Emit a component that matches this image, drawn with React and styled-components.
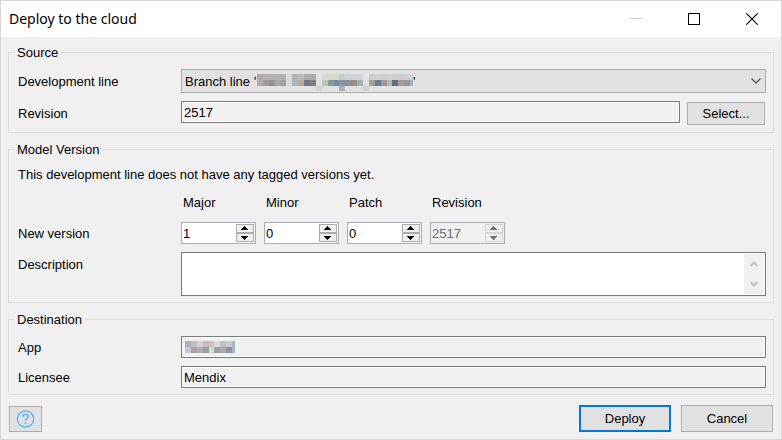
import React, { useState } from 'react';
import styled, { createGlobalStyle, css } from 'styled-components';

const GlobalStyle = createGlobalStyle`
  *, *::before, *::after { box-sizing: border-box; }
  body {
    margin: 0;
    background: #f0f0f0;
    color: #000;
    font: 13px/15px "Liberation Sans", Arial, sans-serif;
  }
  button, input, select, textarea { font: inherit; color: inherit; margin: 0; }
`;

const Window = styled.form`
  border: 1px solid #d6d6d6;
  background: #f0f0f0;
`;

const TitleBar = styled.header`
  display: flex;
  align-items: center;
  height: 36px;
  padding-left: 8px;
  background: #fff;
`;

const Title = styled.h1`
  flex: 1;
  margin: 0;
  font: 400 14px/20px "Noto Sans", "Segoe UI", sans-serif;
`;

const CaptionButton = styled.button`
  display: grid;
  place-items: center;
  width: 58px;
  height: 34px;
  padding: 0;
  border: 0;
  background: transparent;
  color: ${(p) => (p.disabled ? '#ccc' : '#000')};
`;

const Content = styled.main`
  display: flex;
  flex-direction: column;
  gap: 9px;
  padding: 8px 7px 7px;
`;

const Group = styled.fieldset`
  min-width: 0;
  margin: 0;
  padding: 9px 7px ${(p) => (p.$roomy ? '7px' : '6px')} 9px;
  border: 1px solid #dcdcdc;
`;

const Legend = styled.legend`
  margin-left: -3px;
  padding: 0 2px;
`;

const Rows = styled.div`
  display: flex;
  flex-direction: column;
  gap: 8px;
`;

const Row = styled.div`
  display: grid;
  grid-template-columns: 163px minmax(0, 1fr);
  align-items: ${(p) => (p.$top ? 'start' : 'center')};
`;

const Label = styled.label`
  padding-top: ${(p) => (p.$top ? '5px' : 0)};
`;

const Inline = styled.div`
  display: flex;
  align-items: flex-start;
  gap: 7px;
  padding-right: 1px;
`;

const Note = styled.p`
  margin: 1px 0 5px;
`;

const FieldWrap = styled.div`
  position: relative;
  display: flex;
`;

const TextBox = styled.input`
  flex: 1;
  min-width: 0;
  width: 100%;
  height: 22px;
  padding: 0 2px;
  border: 1px solid #7a7a7a;
  border-radius: 0;
  background: #f0f0f0;
  box-shadow: inset 0 0 0 1px #fff;
  outline: 0;
`;

const Combo = styled.select`
  appearance: none;
  width: 100%;
  height: 24px;
  padding: 0 24px 0 3px;
  border: 1px solid #adadad;
  border-radius: 0;
  background: #e1e1e1;
`;

const ComboArrow = styled.svg`
  position: absolute;
  right: 5px;
  top: 9px;
  pointer-events: none;
`;

const Redaction = styled.span`
  position: absolute;
  left: ${(p) => p.$left};
  top: 5px;
  display: flex;
  align-items: flex-start;
  pointer-events: none;
`;

const buttonFace = css`
  padding: 0;
  border: 1px solid #adadad;
  border-radius: 0;
  background: #e1e1e1;
`;

const Button = styled.button`
  ${buttonFace}
  width: 92px;
  height: 27px;
  ${(p) => p.$primary && 'border: 2px solid #0078d7;'}
`;

const SelectButton = styled.button`
  ${buttonFace}
  width: 78px;
  height: 23px;
  margin-top: 1px;
`;

const HelpButton = styled.button`
  ${buttonFace}
  display: grid;
  place-items: center;
  width: 33px;
  height: 26px;
  margin-right: auto;
`;

const Versions = styled.div`
  display: flex;
  gap: 8px;
`;

const VersionHead = styled.label`
  width: 75px;
  padding: 0 0 4px 2px;
`;

const SpinBox = styled.div`
  display: flex;
  width: 75px;
  height: 22px;
  padding: 1px;
  border: 1px solid #abadb3;
  background: ${(p) => (p.$disabled ? '#f0f0f0' : '#fff')};
  color: ${(p) => (p.$disabled ? '#6d6d6d' : '#000')};
`;

const SpinInput = styled.input`
  flex: 1;
  min-width: 0;
  padding: 0;
  border: 0;
  background: transparent;
  outline: 0;
`;

const SpinButtons = styled.div`
  display: grid;
  grid-template-rows: 1fr 1fr;
  width: 18px;
`;

const SpinButton = styled.button`
  display: grid;
  place-items: center;
  padding: 0;
  border: 1px solid ${(p) => (p.disabled ? '#d4d4d4' : '#acacac')};
  background: #f0f0f0;
  color: ${(p) => (p.disabled ? '#6d6d6d' : '#000')};
`;

const MemoBox = styled.div`
  display: flex;
  height: 44px;
  padding: 1px;
  border: 1px solid #7a7a7a;
  background: #fff;
`;

const Memo = styled.textarea`
  flex: 1;
  min-width: 0;
  padding: 1px 2px;
  border: 0;
  resize: none;
  outline: 0;
  overflow: hidden;
  background: transparent;
`;

const ScrollStrip = styled.div`
  display: flex;
  flex-direction: column;
  width: 20px;
  background: #f0f0f0;
`;

const ScrollButton = styled.button`
  flex: 1;
  display: grid;
  place-items: center;
  padding: 0;
  border: 0;
  background: transparent;
`;

const Footer = styled.footer`
  display: flex;
  align-items: center;
  gap: 10px;
  padding: 1px 1px 0;
`;

const BRANCH_CELLS = [
  ['#aeabab', '#adabac'], ['#b5aeaa', '#a39994'], ['#aab3b8', '#8d9696'],
  ['#b9adad', '#aaa6a4'], ['#abb5b5', '#999fac'], ['#d9d9d7', '#d9d9d7'],
  ['#a9b5bd', '#a5b8c5'], ['#b9bbae', '#b8ab92'], ['#aaabb4', '#727885'],
  ['#b0a9ae', '#857a7d'], [null, null, '#d0d0d0'], ['#d5d9d5', '#b3c7c1'],
  ['#d6d8ce', '#8b9c9a'], ['#d5d8cd', '#7090a4'], ['#c9c9cb', '#8d93a0', '#adb0b8'],
  ['#d0d3d6', '#928c99'], ['#d3cfd2', '#9c8f86'], ['#d2d5d7', '#a1b0b8'],
  [null, null, '#d0d0d0'], ['#cccec5', '#a0a597'], ['#cfcfcf', '#6c7b95'],
  ['#cdcdcd', '#a59694'], ['#d0d0d0', '#b3b8ba'], ['#cecece', '#626e7f'],
  ['#cdcacd', '#a39d99'], ['#cfcccf', '#9896a3'], ['#cfd2d2', '#a3b3b8'],
];

const APP_CELLS = [
  ['#b3b0bb', '#c8c5d6'], ['#c0c0c0', '#a9a0a3'], ['#d2d2d6', '#a8b0ae'],
  ['#c4bcc0', '#a29aa5'], ['#c6c3b8', '#cde2c4'], ['#d9dbd8', '#9c9eb0'],
  ['#bdc2bd', '#a9aaa5'], ['#c6c9cf', '#8f929b'], ['#9db9cd', '#9db3c4'],
];

function Mosaic({ cells, width, height, columns }) {
  return (
    <svg
      width={width}
      height={height}
      viewBox={`0 0 ${columns * 6} ${height}`}
      preserveAspectRatio="none"
      shapeRendering="crispEdges"
      aria-hidden="true"
    >
      {cells.map((column, x) =>
        column.map((fill, y) =>
          fill ? <rect key={`${x}-${y}`} x={x * 6} y={y * 6} width="6" height="6" fill={fill} /> : null
        )
      )}
    </svg>
  );
}

function Triangle({ down }) {
  return (
    <svg width="8" height="5" shapeRendering="crispEdges" aria-hidden="true">
      <path
        fill="currentColor"
        d={down ? 'M0 1h7v1H0zM1 2h5v1H1zM2 3h3v1H2zM3 4h1v1H3z' : 'M3 0h1v1H3zM2 1h3v1H2zM1 2h5v1H1zM0 3h7v1H0z'}
      />
    </svg>
  );
}

function Spinner({ id, initial, disabled }) {
  const [value, setValue] = useState(initial);
  const step = (n) => setValue((v) => Math.max(0, Number(v) + n));
  return (
    <SpinBox $disabled={disabled}>
      <SpinInput id={id} inputMode="numeric" value={value} disabled={disabled} onChange={(e) => setValue(e.target.value)} />
      <SpinButtons>
        <SpinButton type="button" aria-label="Increase" disabled={disabled} onClick={() => step(1)}>
          <Triangle />
        </SpinButton>
        <SpinButton type="button" aria-label="Decrease" disabled={disabled} onClick={() => step(-1)}>
          <Triangle down />
        </SpinButton>
      </SpinButtons>
    </SpinBox>
  );
}

const VERSION_PARTS = [
  { id: 'major', label: 'Major', value: 1 },
  { id: 'minor', label: 'Minor', value: 0 },
  { id: 'patch', label: 'Patch', value: 0 },
  { id: 'rev', label: 'Revision', value: 2517, disabled: true },
];

export default function App() {
  return (
    <>
      <GlobalStyle />
      <Window onSubmit={(e) => e.preventDefault()}>
        <TitleBar>
          <Title>Deploy to the cloud</Title>
          <CaptionButton type="button" aria-label="Minimize" disabled>
            <svg width="12" height="12" shapeRendering="crispEdges"><path d="M0 5h12v1H0z" fill="currentColor" /></svg>
          </CaptionButton>
          <CaptionButton type="button" aria-label="Maximize">
            <svg width="12" height="12" shapeRendering="crispEdges"><path d="M.5.5h11v11H.5z" fill="none" stroke="currentColor" /></svg>
          </CaptionButton>
          <CaptionButton type="button" aria-label="Close">
            <svg width="12" height="12"><path d="M.3.3l11.4 11.4M11.7.3L.3 11.7" fill="none" stroke="currentColor" strokeWidth="1.1" /></svg>
          </CaptionButton>
        </TitleBar>
        <Content>
          <Group $roomy>
            <Legend>Source</Legend>
            <Rows>
              <Row>
                <Label htmlFor="line">Development line</Label>
                <FieldWrap>
                  <Combo id="line">
                    <option>Branch line '</option>
                  </Combo>
                  <Redaction $left="76px">
                    <Mosaic cells={BRANCH_CELLS} columns={26.5} width={156} height={17} />'
                  </Redaction>
                  <ComboArrow width="10" height="6" aria-hidden="true">
                    <path d="M.5 .5L5 5L9.5 .5" fill="none" stroke="#444" strokeWidth="1.1" />
                  </ComboArrow>
                </FieldWrap>
              </Row>
              <Row>
                <Label htmlFor="revision">Revision</Label>
                <Inline>
                  <TextBox id="revision" readOnly defaultValue="2517" />
                  <SelectButton type="button">Select...</SelectButton>
                </Inline>
              </Row>
            </Rows>
          </Group>

          <Group>
            <Legend>Model Version</Legend>
            <Rows>
              <Note>This development line does not have any tagged versions yet.</Note>
              <Row>
                <span />
                <Versions>
                  {VERSION_PARTS.map((p) => (
                    <VersionHead key={p.id} htmlFor={p.id}>{p.label}</VersionHead>
                  ))}
                </Versions>
              </Row>
              <Row>
                <Label htmlFor="major">New version</Label>
                <Versions>
                  {VERSION_PARTS.map((p) => (
                    <Spinner key={p.id} id={p.id} initial={p.value} disabled={p.disabled} />
                  ))}
                </Versions>
              </Row>
              <Row $top>
                <Label $top htmlFor="description">Description</Label>
                <MemoBox>
                  <Memo id="description" />
                  <ScrollStrip>
                    <ScrollButton type="button" aria-label="Scroll up" disabled>
                      <svg width="8" height="6"><path d="M.7 5L4 1.5L7.3 5" fill="none" stroke="#bfbfbf" strokeWidth="2" /></svg>
                    </ScrollButton>
                    <ScrollButton type="button" aria-label="Scroll down" disabled>
                      <svg width="8" height="6"><path d="M.7 1L4 4.5L7.3 1" fill="none" stroke="#bfbfbf" strokeWidth="2" /></svg>
                    </ScrollButton>
                  </ScrollStrip>
                </MemoBox>
              </Row>
            </Rows>
          </Group>

          <Group>
            <Legend>Destination</Legend>
            <Rows>
              <Row>
                <Label htmlFor="app">App</Label>
                <FieldWrap>
                  <TextBox id="app" readOnly />
                  <Redaction $left="4px">
                    <Mosaic cells={APP_CELLS} columns={8.5} width={50} height={12} />
                  </Redaction>
                </FieldWrap>
              </Row>
              <Row>
                <Label htmlFor="licensee">Licensee</Label>
                <TextBox id="licensee" readOnly defaultValue="Mendix" />
              </Row>
            </Rows>
          </Group>

          <Footer>
            <HelpButton type="button" aria-label="Help">
              <svg width="19" height="18" viewBox="0 0 18 18" fill="none" stroke="#4db4f5">
                <circle cx="9" cy="9" r="8.2" strokeWidth="1.3" />
                <path d="M6.4 7V6.4C6.4 5 7.5 4.2 9 4.2s2.600.8 2.600 2.200c0 1.900-2.500 1.900-2.500 4.300" strokeWidth="1.4" />
                <path d="M9.100 12.200v1.700" strokeWidth="1.7" />
              </svg>
            </HelpButton>
            <Button type="submit" $primary>Deploy</Button>
            <Button type="button">Cancel</Button>
          </Footer>
        </Content>
      </Window>
    </>
  );
}
